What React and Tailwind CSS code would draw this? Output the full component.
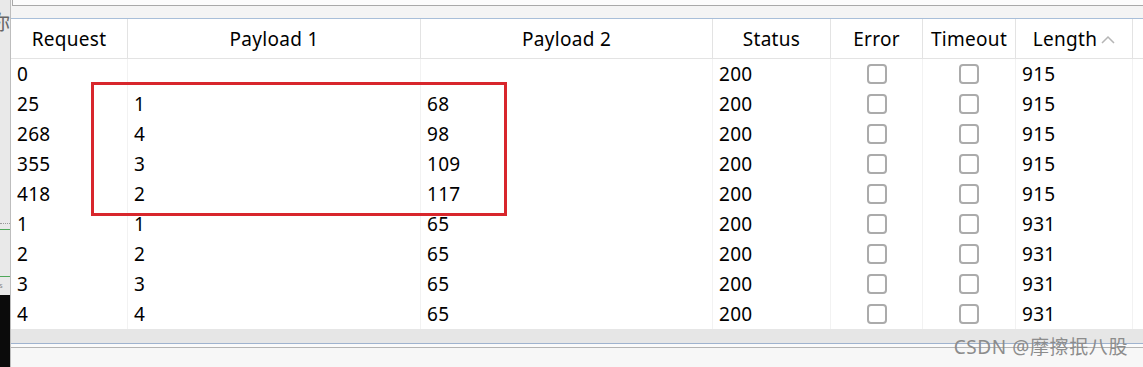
import React from 'react'

const rows = [
  ['0', '', '', '200', '915'],
  ['25', '1', '68', '200', '915'],
  ['268', '4', '98', '200', '915'],
  ['355', '3', '109', '200', '915'],
  ['418', '2', '117', '200', '915'],
  ['1', '1', '65', '200', '931'],
  ['2', '2', '65', '200', '931'],
  ['3', '3', '65', '200', '931'],
  ['4', '4', '65', '200', '931'],
]

const cols = 'grid grid-cols-[117px_293px_292px_118px_92px_93px_117px_1fr]'

function Checkbox() {
  return <div className="w-[20px] h-[20px] rounded-[4px] border-2 border-[#ababab] bg-white" />
}

function HeaderCell({ children }) {
  return (
    <div className="flex items-center justify-center pt-[1px] border-r border-[#e3e3e3] h-full">
      {children}
    </div>
  )
}

export default function App() {
  return (
    <div
      className="relative w-[1143px] h-[367px] flex overflow-hidden bg-[#f7f7f7] text-black"
      style={{ fontFamily: '"Noto Sans", "Noto Sans CJK SC", sans-serif' }}
    >
      {/* left strip from the window behind */}
      <div className="w-[10px] shrink-0 flex flex-col bg-[#e9e9e9] overflow-hidden">
        <div className="h-[12px]" />
        <div className="h-[22px] overflow-hidden text-[20px] leading-[22px] text-[#666] -ml-[10px]">你</div>
        <div className="flex-1" />
        <div className="border-t border-dotted border-[#9a9a9a]" />
        <div className="h-[5px]" />
        <div className="h-[1px] bg-[#4fa85a]" />
        <div className="h-[46px]" />
        <div className="h-[1px] bg-[#4fa85a]" />
        <div className="h-[18px] text-[7px] leading-[18px] text-[#888] -ml-[6px]">vis</div>
        <div className="h-[72px] bg-[#0b0b0b]" />
      </div>

      <div className="flex-1 flex flex-col border-l border-[#bdbdbd]">
        {/* top input box */}
        <div className="h-[6px] ml-[1px] bg-[#fcfcfc] border-l border-b border-[#a9a9a9]" />
        <div className="h-[12px] bg-[#f4f4f4]" />
        <div className="h-[1px] bg-[#a9bfd9]" />

        {/* table */}
        <div className="bg-white text-[19px] tracking-[0.3px]">
          <div className={`${cols} h-[40px] border-b border-[#e3e3e3]`}>
            <HeaderCell>Request</HeaderCell>
            <HeaderCell>Payload 1</HeaderCell>
            <HeaderCell>Payload 2</HeaderCell>
            <HeaderCell>Status</HeaderCell>
            <HeaderCell>Error</HeaderCell>
            <HeaderCell>Timeout</HeaderCell>
            <HeaderCell>
              <span>Length</span>
              <svg width="14" height="10" viewBox="0 0 14 10" className="ml-[4px] mt-[2px]">
                <polyline points="1,8 7,2 13,8" fill="none" stroke="#b5b5b5" strokeWidth="1.5" />
              </svg>
            </HeaderCell>
            <div />
          </div>
          {rows.map((r, i) => (
            <div key={i} className={`${cols} h-[30px]`}>
              <div className="flex items-center pl-[6px] border-r border-[#f2f2f2]">{r[0]}</div>
              <div className="flex items-center pl-[6px] border-r border-[#f2f2f2]">{r[1]}</div>
              <div className="flex items-center pl-[6px] border-r border-[#f2f2f2]">{r[2]}</div>
              <div className="flex items-center pl-[6px] border-r border-[#f2f2f2]">{r[3]}</div>
              <div className="flex items-center justify-center border-r border-[#f2f2f2]"><Checkbox /></div>
              <div className="flex items-center justify-center border-r border-[#f2f2f2]"><Checkbox /></div>
              <div className="flex items-center pl-[6px] border-r border-[#f2f2f2]">{r[4]}</div>
              <div />
            </div>
          ))}
        </div>

        {/* scrollbar band and bottom panel */}
        <div className="h-[14px] bg-[#e6e6e6]" />
        <div className="h-[1px] bg-[#9fb3cf]" />
        <div className="h-[3px] bg-[#fafafa]" />
        <div className="h-[1px] bg-[#b4b4b4]" />
        <div className="flex-1 bg-[#f7f7f7]" />
      </div>

      {/* red annotation box */}
      <div className="absolute left-[91px] top-[82px] w-[416px] h-[134px] border-[3px] border-[#d8262c]" />

      {/* watermark */}
      <div className="absolute right-[15px] top-[335px] text-[19px] leading-[24px] text-[#8c8c8c] tracking-[0.6px]">
        CSDN @摩擦抿八股
      </div>
    </div>
  )
}
